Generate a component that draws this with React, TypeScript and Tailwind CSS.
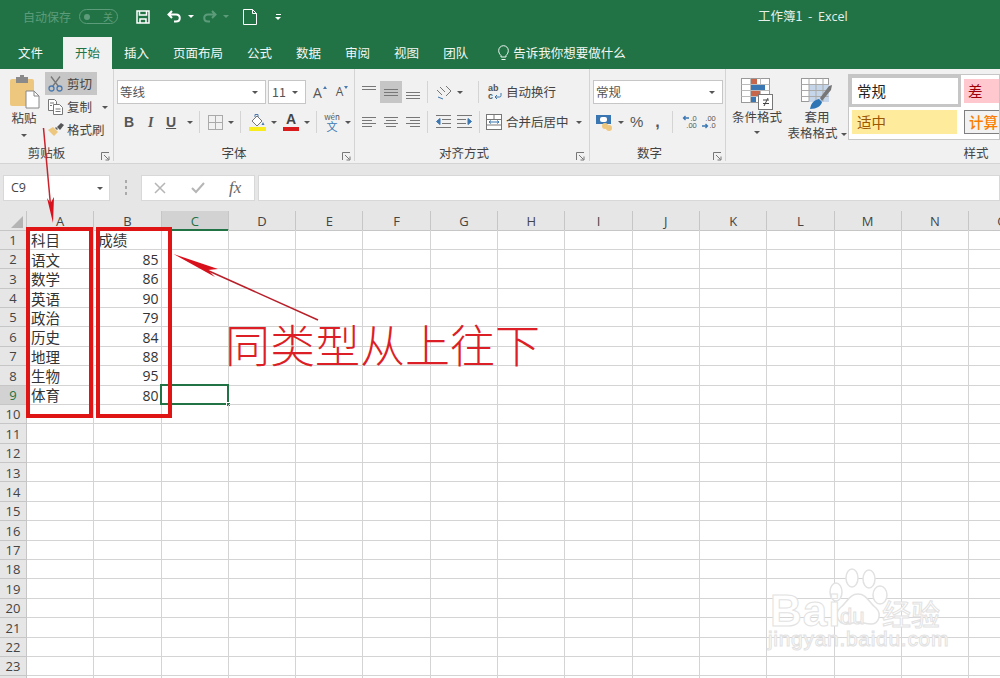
import type { ReactNode } from 'react'

const CJK = "font-['Noto_Sans_CJK_SC','Noto_Sans',sans-serif]"
const COLUMNS = ['A', 'B', 'C', 'D', 'E', 'F', 'G', 'H', 'I', 'J', 'K', 'L', 'M', 'N', 'O']
const ROW_NUMBERS = Array.from({ length: 24 }, (_, i) => i + 1)

const SCORES: Record<number, [string, string]> = {
  1: ['科目', '成绩'],
  2: ['语文', '85'],
  3: ['数学', '86'],
  4: ['英语', '90'],
  5: ['政治', '79'],
  6: ['历史', '84'],
  7: ['地理', '88'],
  8: ['生物', '95'],
  9: ['体育', '80'],
}

const TABS = ['文件', '开始', '插入', '页面布局', '公式', '数据', '审阅', '视图', '团队']

function Caret({ className = '', color = 'border-t-[#555]' }: { className?: string; color?: string }) {
  return (
    <span
      className={`inline-block h-0 w-0 shrink-0 border-x-[3px] border-t-[3px] border-x-transparent ${color} ${className}`}
    />
  )
}

function Sep({ className = '' }: { className?: string }) {
  return <span className={`h-[22px] w-px shrink-0 bg-[#d4d4d4] ${className}`} />
}

function Launcher({ className = '' }: { className?: string }) {
  return (
    <svg width="9" height="9" viewBox="0 0 9 9" className={`shrink-0 ${className}`} fill="none" stroke="#777">
      <path d="M0.5 8V0.5H8" />
      <path d="M3 3l4.5 4.5M4.5 8H8V4.5" />
    </svg>
  )
}

function GroupLabel({ text, launcherClass, className = '' }: { text: string; launcherClass?: string; className?: string }) {
  return (
    <div className={`relative mt-auto flex h-[17px] items-center justify-center pt-[2px] text-[12.5px] text-[#444] ${className}`}>
      <span>{text}</span>
      {launcherClass && <Launcher className={`absolute top-[8px] ${launcherClass}`} />}
    </div>
  )
}

function Combo({ text, className }: { text: string; className: string }) {
  return (
    <div className={`flex h-[24px] items-center justify-between border border-[#c6c6c6] bg-white pl-[2px] pr-[7px] text-[12.5px] text-[#555] ${className}`}>
      <span>{text}</span>
      <Caret />
    </div>
  )
}

function AlignLines({ rows, active }: { rows: [number, number, number][]; active?: boolean }) {
  return (
    <span className={`flex h-[22px] w-[22px] shrink-0 items-center justify-center ${active ? 'bg-[#c6c6c6]' : ''}`}>
      <svg width="16" height="16" viewBox="0 0 16 16" stroke="#777" fill="none">
        {rows.map(([x1, x2, y], i) => (
          <path key={i} d={`M${x1} ${y + 0.5}H${x2}`} />
        ))}
      </svg>
    </span>
  )
}

function PasteIcon() {
  return (
    <svg width="31" height="34" viewBox="0 0 31 34">
      <rect x="1" y="4" width="24" height="27" rx="2" fill="#eec77f" />
      <rect x="7" y="2" width="12" height="6" fill="#8a8a8a" />
      <rect x="11" y="0" width="4" height="4" fill="#8a8a8a" />
      <path d="M17 16h8l5 5v12H17z" fill="#fff" stroke="#888" />
      <path d="M25 16v5h5" fill="none" stroke="#888" />
    </svg>
  )
}

function CutIcon() {
  return (
    <svg width="15" height="16" viewBox="0 0 15 16" fill="none">
      <path d="M3 0.5l7.5 10M12 0.5L4.500 10.500" stroke="#777" strokeWidth="1.300" />
      <circle cx="3.500" cy="12.500" r="2.500" stroke="#4a7ab0" strokeWidth="1.300" />
      <circle cx="11.500" cy="12.500" r="2.500" stroke="#4a7ab0" strokeWidth="1.300" />
    </svg>
  )
}

function CopyIcon() {
  return (
    <svg width="15" height="16" viewBox="0 0 15 16" fill="#fff" stroke="#777">
      <path d="M0.500 0.500h6l2 2v9h-8z" />
      <path d="M5.500 5.500h6l3 3v7h-9z" />
      <path d="M2 4h4M2 6.500h2M7.500 10h5M7.500 12.500h5" />
    </svg>
  )
}

function BrushIcon() {
  return (
    <svg width="16" height="14" viewBox="0 0 16 14">
      <path d="M0 7l5-3 5 5-4 4z" fill="#eec77f" />
      <path d="M7 5l1-1 2 2-1 1z" fill="#666" />
      <path d="M9 4l4-4 3 2-4 5z" fill="#555" />
    </svg>
  )
}

function BorderIcon() {
  return (
    <svg width="15" height="15" viewBox="0 0 15 15" fill="none" stroke="#aaa">
      <rect x="0.500" y="0.500" width="14" height="14" />
      <path d="M7.500 0.500v14M0.500 7.500h14" />
    </svg>
  )
}

function FillIcon() {
  return (
    <svg width="17" height="18" viewBox="0 0 17 18">
      <path d="M3 8l5-5 5 5-5 5z" fill="#fff" stroke="#777" />
      <path d="M6 4V1.500h3V4" fill="none" stroke="#4a7ab0" />
      <path d="M14 9l1.500 3h-3z" fill="#4a7ab0" />
      <rect x="0" y="14" width="17" height="4" fill="#f8ec1c" />
    </svg>
  )
}

function CondFormatIcon() {
  return (
    <svg width="32" height="33" viewBox="0 0 32 33">
      <rect x="0.500" y="0.500" width="28" height="24" fill="#fff" stroke="#999" />
      <path d="M0.500 6.500h28M0.500 12.500h28M0.500 18.500h28M9.500 0.500v24M19.500 0.500v24" stroke="#bbb" />
      <rect x="10" y="1" width="6" height="5" fill="#c8664a" />
      <rect x="10" y="7" width="14" height="5" fill="#3a76b2" />
      <rect x="10" y="13" width="9" height="5" fill="#c8664a" />
      <rect x="10" y="19" width="5" height="5" fill="#3a76b2" />
      <rect x="17.500" y="16.500" width="14" height="15" fill="#fff" stroke="#777" />
      <path d="M22 22h6M22 25.500h6M23 28l4-8" stroke="#444" fill="none" />
    </svg>
  )
}

function TableFormatIcon() {
  return (
    <svg width="32" height="33" viewBox="0 0 32 33">
      <rect x="0.500" y="0.500" width="27" height="23" fill="#fff" stroke="#999" />
      <path d="M8 7h20v17H8z" fill="#c6d6ea" />
      <path d="M0.500 6.500h27M0.500 12.500h27M0.500 18.500h27M8 0.500v23M15 0.500v23M22 0.500v23" stroke="#aaa" />
      <path d="M9 31c1-6 4-9 9-10l3 3c-1 4-5 7-12 7z" fill="#2e75b6" />
      <path d="M19 20l9-12 3-1-1 5-9 11z" fill="#777" />
    </svg>
  )
}

function ClipboardGroup() {
  return (
    <section className="flex h-full w-[114px] shrink-0 flex-col border-r border-[#d4d4d4]">
      <div className="flex pt-[3px]">
        <div className="flex w-[45px] flex-col items-center pl-[3px] pt-[3px] text-[12.5px] text-[#444]">
          <PasteIcon />
          <span className="mt-[-1px] leading-[20px]">粘贴</span>
          <Caret className="mt-[6px]" />
        </div>
        <div className="flex w-[64px] flex-col text-[12.5px] text-[#444]">
          <div className="flex h-[23px] w-[52px] items-center gap-[4px] bg-[#c6c6c6] pl-[3px] pt-px">
            <CutIcon />
            <span>剪切</span>
          </div>
          <div className="flex h-[23px] items-center gap-[4px] pl-[3px] pt-px">
            <CopyIcon />
            <span>复制</span>
            <Caret className="ml-[6px]" />
          </div>
          <div className="flex h-[23px] items-center gap-[3px] pl-[3px] pt-px">
            <BrushIcon />
            <span>格式刷</span>
          </div>
        </div>
      </div>
      <GroupLabel text="剪贴板" launcherClass="right-[3px]" className="pr-[20px]" />
    </section>
  )
}

function FontGroup() {
  return (
    <section className="flex h-full w-[241px] shrink-0 flex-col border-r border-[#d4d4d4]">
      <div className="flex items-center gap-[2px] pl-[3px] pt-[11px]">
        <Combo text="等线" className="w-[149px]" />
        <Combo text="11" className="w-[38px] pl-[3px]" />
        <span className="ml-[5px] font-['Open_Sans',sans-serif] text-[14px] text-[#555]">A</span>
        <span className="ml-[-1px] mb-[10px] h-0 w-0 border-x-[2px] border-b-[3px] border-x-transparent border-b-[#4a7ab0]" />
        <span className="ml-[7px] font-['Open_Sans',sans-serif] text-[12px] text-[#555]">A</span>
        <span className="ml-[-1px] mb-[10px] h-0 w-0 border-x-[2px] border-t-[3px] border-x-transparent border-t-[#4a7ab0]" />
      </div>
      <div className="mt-[6px] flex h-[24px] items-center pl-[10px] font-['Liberation_Sans',sans-serif] text-[14px] text-[#555]">
        <span className="w-[18px] font-bold">B</span>
        <span className="ml-[6px] w-[18px] font-['Liberation_Serif',serif] font-bold italic">I</span>
        <span className="w-[16px] font-bold underline">U</span>
        <Caret className="ml-[5px]" />
        <Sep className="ml-[6px]" />
        <span className="ml-[8px] flex"><BorderIcon /></span>
        <Caret className="ml-[5px]" />
        <Sep className="ml-[6px]" />
        <span className="ml-[8px] flex"><FillIcon /></span>
        <Caret className="ml-[5px]" />
        <span className="ml-[6px] flex w-[16px] flex-col items-center font-bold leading-[13px] text-[#444]">
          A
          <span className="mt-[1px] h-[4px] w-[16px] bg-[#d91b1b]" />
        </span>
        <Caret className="ml-[5px]" />
        <Sep className="ml-[6px]" />
        <span className={`ml-[8px] flex w-[14px] flex-col items-center text-[8px] leading-[8px] text-[#555] ${CJK}`}>
          wén
          <span className="text-[11px] leading-[10px] text-[#3a76b2]">文</span>
        </span>
        <Caret className="ml-[6px]" />
      </div>
      <GroupLabel text="字体" launcherClass="right-[3px]" />
    </section>
  )
}

function WrapTextIcon() {
  return (
    <span className="relative flex h-[16px] w-[14px] shrink-0 flex-col font-['Liberation_Sans',sans-serif] text-[9px] font-bold leading-[8px] text-[#555]">
      <span>ab</span>
      <span>c</span>
      <svg width="8" height="7" viewBox="0 0 8 7" className="absolute bottom-0 right-0" fill="none" stroke="#3a76b2">
        <path d="M7 0v2.500a1.500 1.500 0 0 1-1.500 1.500H1M3 2L1 4l2 2" />
      </svg>
    </span>
  )
}

function AlignmentGroup() {
  return (
    <section className="flex h-full w-[235px] shrink-0 flex-col border-r border-[#d4d4d4]">
      <div className="flex h-[34px] items-end pl-[3px]">
        <AlignLines rows={[[1, 15, 2], [1, 15, 5]]} />
        <AlignLines active rows={[[1, 15, 5], [1, 15, 8], [1, 15, 11]]} />
        <AlignLines rows={[[1, 15, 8], [1, 15, 11], [1, 15, 14]]} />
        <Sep className="ml-[3px]" />
        <span className="relative mb-[3px] ml-[7px] h-[16px] w-[17px] shrink-0">
          <svg width="17" height="16" viewBox="0 0 17 16" fill="none" stroke="#777">
            <path d="M2 6l5 5M5 3l5 5M11 2l5 5-5 5" />
            <path d="M3 13l5 2" stroke="#3a76b2" />
          </svg>
        </span>
        <Caret className="mb-[9px] ml-[5px]" />
        <Sep className="ml-[15px]" />
        <span className="mb-[3px] ml-[9px] flex">
          <WrapTextIcon />
        </span>
        <span className="mb-[1px] ml-[4px] text-[12.5px] leading-[20px] text-[#444]">自动换行</span>
      </div>
      <div className="mt-[7px] flex h-[24px] items-center pl-[3px]">
        <AlignLines rows={[[1, 15, 3], [1, 11, 6], [1, 15, 9], [1, 11, 12]]} />
        <AlignLines rows={[[1, 15, 3], [3, 13, 6], [1, 15, 9], [3, 13, 12]]} />
        <AlignLines rows={[[1, 15, 3], [5, 15, 6], [1, 15, 9], [5, 15, 12]]} />
        <Sep className="ml-[3px]" />
        <svg width="16" height="14" viewBox="0 0 16 14" className="ml-[7px]" fill="none" stroke="#777">
          <path d="M1 0.500h15M7 4.500h9M7 8.500h9M1 12.500h15" />
          <path d="M5 3.500L1.500 6.500 5 9.500z" fill="#3a76b2" stroke="#3a76b2" />
        </svg>
        <svg width="16" height="14" viewBox="0 0 16 14" className="ml-[6px]" fill="none" stroke="#777">
          <path d="M0 0.500h15M0 4.500h9M0 8.500h9M0 12.500h15" />
          <path d="M11 3.500L14.500 6.500 11 9.500z" fill="#3a76b2" stroke="#3a76b2" />
        </svg>
        <Sep className="ml-[6px]" />
        <svg width="16" height="16" viewBox="0 0 16 16" className="ml-[6px]" fill="#fff" stroke="#777">
          <rect x="0.500" y="0.500" width="15" height="15" />
          <path d="M0.500 5.500h15M0.500 11h15M8 0.500v5" fill="none" />
          <path d="M3 8h10M5 6.500L3 8l2 1.500M11 6.500L13 8l-2 1.500" stroke="#3a76b2" fill="none" />
        </svg>
        <span className="ml-[4px] text-[12.5px] text-[#444]">合并后居中</span>
        <Caret className="ml-[7px]" />
      </div>
      <GroupLabel text="对齐方式" launcherClass="right-[4px]" className="pr-[16px]" />
    </section>
  )
}

function DecimalIcon({ increase }: { increase?: boolean }) {
  return (
    <svg width="15" height="15" viewBox="0 0 15 15" fill="none" stroke="#3a76b2" strokeWidth="1.300">
      {increase ? <path d="M7 3H1.500M3.500 1L1.500 3l2 2" /> : <path d="M1 11h5.500M4.500 9l2 2-2 2" />}
    </svg>
  )
}

function NumberGroup() {
  return (
    <section className="flex h-full w-[136px] shrink-0 flex-col border-r border-[#d4d4d4]">
      <div className="pl-[3px] pt-[11px]">
        <Combo text="常规" className="w-[130px]" />
      </div>
      <div className="mt-[6px] flex h-[24px] items-center pl-[6px] font-['Liberation_Sans',sans-serif] text-[#555]">
        <svg width="17" height="17" viewBox="0 0 17 17">
          <rect x="0" y="1" width="15" height="9" fill="#3a76b2" />
          <rect x="4" y="3" width="7" height="5" rx="2" fill="#fff" />
          <circle cx="9" cy="12" r="3" fill="#eec77f" />
          <circle cx="13" cy="14" r="3" fill="#eec77f" />
        </svg>
        <Caret className="ml-[5px]" />
        <span className="ml-[6px] text-[15px]">%</span>
        <span className="ml-[12px] font-bold">,</span>
        <Sep className="ml-[12px]" />
        <span className="relative ml-[9px] h-[15px] w-[15px] shrink-0 text-[7.500px] leading-[7.500px]">
          <DecimalIcon increase />
          <span className="absolute right-0 top-0">.0</span>
          <span className="absolute bottom-0 right-0">.00</span>
        </span>
        <span className="relative ml-[4px] h-[15px] w-[15px] shrink-0 text-[7.500px] leading-[7.500px]">
          <DecimalIcon />
          <span className="absolute right-0 top-0">.00</span>
          <span className="absolute bottom-0 right-0">.0</span>
        </span>
      </div>
      <GroupLabel text="数字" launcherClass="right-[3px]" className="pr-[16px]" />
    </section>
  )
}

function StylesGroup() {
  return (
    <section className="flex h-full min-w-0 flex-1 flex-col">
      <div className="flex pt-[5px]">
        <div className="flex w-[60px] shrink-0 flex-col items-center pl-[2px] pt-[4px] text-[12.5px] leading-[16px] text-[#444]">
          <CondFormatIcon />
          <span className="mt-[-2px]">条件格式</span>
          <Caret className="mt-[6px]" />
        </div>
        <div className="flex w-[62px] shrink-0 flex-col items-center pt-[4px] text-[12.5px] leading-[16px] text-[#444]">
          <TableFormatIcon />
          <span className="mt-[-2px]">套用</span>
          <span className="whitespace-nowrap">表格格式<Caret className="mb-[2px] ml-[3px]" /></span>
        </div>
        <div className="h-[66px] flex-1 overflow-hidden border border-[#c6c6c6] bg-white text-[14.500px]">
          <div className="flex h-[32px] w-[170px]">
            <span className="flex h-[32px] w-[112px] items-center border-[3px] border-[#c6c6c6] pl-[5px] text-[#222]">常规</span>
            <span className="ml-[3px] mt-[4px] flex h-[24px] w-[50px] items-center bg-[#ffc7ce] pl-[4px] text-[#9c0006]">差</span>
          </div>
          <div className="mt-[3px] flex w-[170px]">
            <span className="ml-[3px] flex h-[24px] w-[105px] items-center bg-[#ffeb9c] pl-[5px] text-[#9c5700]">适中</span>
            <span className="ml-[7px] flex h-[24px] w-[50px] items-center border border-[#7f7f7f] bg-[#f2f2f2] pl-[4px] font-medium text-[#fa7d00]">计算</span>
          </div>
        </div>
      </div>
      <GroupLabel text="样式" className="pl-[226px]" />
    </section>
  )
}

function TitleBar() {
  return (
    <header className="flex h-[37px] items-center bg-[#217346] pb-[4px] pl-[23px] text-white">
      <span className="w-[49px] text-[12px] text-[#5d9c7a]">自动保存</span>
      <span className="ml-[7px] flex h-[15px] w-[39px] items-center justify-between rounded-full border border-[#5d9c7a] px-[4px] text-[10px] text-[#5d9c7a]">
        <span className="h-[6px] w-[6px] rounded-full bg-[#5d9c7a]" />关
      </span>
      <svg width="14" height="14" viewBox="0 0 14 14" className="ml-[18px]" fill="none" stroke="#fff" strokeWidth="1.500">
        <path d="M1 1h12v12H1z" />
        <path d="M3.500 1v4h7V1M4 13V9h6v4" />
      </svg>
      <svg width="15" height="13" viewBox="0 0 15 13" className="ml-[17px]" fill="none" stroke="#fff" strokeWidth="2">
        <path d="M5 1L1.500 4.500 5 8M2 4.500h7c5 0 5 7 0 7H7" />
      </svg>
      <Caret className="ml-[6px]" color="border-t-white" />
      <svg width="15" height="13" viewBox="0 0 15 13" className="ml-[8px]" fill="none" stroke="#5d9c7a" strokeWidth="2">
        <path d="M10 1l3.500 3.500L10 8M13 4.500H6c-5 0-5 7 0 7h2" />
      </svg>
      <Caret className="ml-[6px]" color="border-t-[#5d9c7a]" />
      <svg width="14" height="16" viewBox="0 0 14 16" className="ml-[14px]" fill="none" stroke="#fff">
        <path d="M0.500 0.500h9l4 4v11H0.500zM9.500 0.500v4h4" />
      </svg>
      <span className="ml-[18px] flex flex-col items-center gap-[2px]">
        <span className="h-px w-[5px] bg-white" />
        <Caret color="border-t-white" />
      </span>
      <span className="ml-[477px] whitespace-nowrap text-[12.5px] text-[#e6f0ea]">
        工作簿1 &nbsp;-&nbsp; <span className="font-['Open_Sans',sans-serif]">Excel</span>
      </span>
    </header>
  )
}

function TabBar() {
  return (
    <nav className="flex h-[32px] items-stretch bg-[#217346] pl-[6px] text-[12.5px] text-[#f3f7f4]">
      {TABS.map((tab) => (
        <span
          key={tab}
          className={
            tab === '开始'
              ? 'ml-[8px] flex items-center bg-[#f1f1f1] px-[12px] text-[#217346]'
              : 'flex items-center px-[12px]'
          }
        >
          {tab}
        </span>
      ))}
      <span className="ml-[18px] flex items-center">
        <svg width="11" height="16" viewBox="0 0 11 16" fill="none" stroke="#f3f7f4">
          <path d="M3 10.500C1.500 9 0.700 7.500 0.700 5.500a4.800 4.800 0 0 1 9.600 0c0 2-.8 3.500-2.300 5V12H3zM3.500 14.500h4" />
        </svg>
        <span className="ml-[4px]">告诉我你想要做什么</span>
      </span>
    </nav>
  )
}

function FormulaBar() {
  return (
    <div className="flex h-[47px] items-start bg-[#e6e6e6] pl-[3px] pt-[11px]">
      <div className="flex h-[26px] w-[107px] items-center justify-between border border-[#d8d8d8] bg-white pl-[7px] pr-[6px] font-['Open_Sans',sans-serif] text-[12.5px] text-[#444]">
        C9
        <Caret />
      </div>
      <span className="ml-[15px] mt-[5px] flex flex-col gap-[3px]">
        <span className="h-[3px] w-[2px] bg-[#aaa]" />
        <span className="h-[3px] w-[2px] bg-[#aaa]" />
        <span className="h-[3px] w-[2px] bg-[#aaa]" />
      </span>
      <div className="ml-[14px] flex h-[26px] w-[114px] items-center border border-[#d8d8d8] bg-white pl-[12px]">
        <svg width="13" height="12" viewBox="0 0 13 12" stroke="#b5b5b5" strokeWidth="1.500" fill="none">
          <path d="M1 1l10 10M11 1L1 11" />
        </svg>
        <svg width="15" height="12" viewBox="0 0 15 12" className="ml-[24px]" stroke="#b5b5b5" strokeWidth="2" fill="none">
          <path d="M1 6l4 4 8-9" />
        </svg>
        <span className="ml-[23px] font-['Liberation_Serif',serif] text-[17px] italic text-[#666]">fx</span>
      </div>
      <div className="ml-[3px] h-[26px] flex-1 border border-[#d8d8d8] bg-white" />
    </div>
  )
}

function Sheet() {
  return (
    <div className="grid grid-cols-[27px_repeat(15,67.3px)] auto-rows-[19.4px] bg-white">
      <div className="relative h-[20px] border-b border-r border-[#c6c6c6] bg-[#e6e6e6]">
        <span className="absolute bottom-[2px] right-[3px] h-0 w-0 border-b-[12px] border-l-[12px] border-b-[#b4b4b4] border-l-transparent" />
      </div>
      {COLUMNS.map((col) => (
        <div
          key={col}
          className={
            col === 'C'
              ? "flex h-[20px] items-center justify-center border-b-2 border-r border-b-[#217346] border-r-[#c6c6c6] bg-[#d2d2d2] pt-[3px] font-['Open_Sans',sans-serif] text-[13px] text-[#217346]"
              : "flex h-[20px] items-center justify-center border-b border-r border-[#c6c6c6] bg-[#e6e6e6] pt-[3px] font-['Open_Sans',sans-serif] text-[13px] text-[#444]"
          }
        >
          {col}
        </div>
      ))}
      {ROW_NUMBERS.map((row) => (
        <Row key={row} row={row} />
      ))}
    </div>
  )
}

function Row({ row }: { row: number }) {
  const data = SCORES[row]
  return (
    <>
      <div
        className={
          row === 9
            ? "flex items-center justify-center border-b border-r border-[#c6c6c6] bg-[#d2d2d2] pt-[2px] font-['Open_Sans',sans-serif] text-[13px] text-[#217346]"
            : "flex items-center justify-center border-b border-r border-[#c6c6c6] bg-[#e6e6e6] pt-[2px] font-['Open_Sans',sans-serif] text-[13px] text-[#444]"
        }
      >
        {row}
      </div>
      {COLUMNS.map((col) => (
        <Cell key={col} col={col} row={row} value={data?.[col === 'A' ? 0 : 1]} />
      ))}
    </>
  )
}

function Cell({ col, row, value }: { col: string; row: number; value?: string }) {
  const hasValue = col === 'A' || col === 'B'
  const numeric = hasValue && value !== undefined && /^\d+$/.test(value)
  return (
    <div
      className={`relative flex items-center overflow-visible border-b border-r border-[#d4d4d4] pt-[2px] text-[14.5px] leading-none text-[#333] ${
        numeric ? "justify-end pr-[2px] font-['Open_Sans',sans-serif] text-[14px]" : 'pl-[4px]'
      }`}
    >
      {hasValue ? value : null}
      {col === 'C' && row === 9 && <Selection />}
    </div>
  )
}

function Selection() {
  return (
    <span className="absolute left-[-2px] top-[-2px] h-[21px] w-[69px] border-2 border-[#217346]">
      <span className="absolute bottom-[-4px] right-[-4px] h-[5px] w-[5px] border border-white bg-[#217346]" />
    </span>
  )
}

function Annotations() {
  return (
    <>
      <span className="absolute left-[26px] top-[227px] h-[191px] w-[67px] border-[4px] border-[#df1414]" />
      <span className="absolute left-[96px] top-[227px] h-[191px] w-[76px] border-[4px] border-[#df1414]" />
      <svg width="1000" height="678" viewBox="0 0 1000 678" className="pointer-events-none absolute left-0 top-0">
        <path d="M43.500 128L50.500 205" stroke="#c8232c" strokeWidth="1.500" fill="none" />
        <path d="M53 223L47 198 50.500 203 54 197z" fill="#d8101c" />
        <path d="M318 320L200 267" stroke="#b81f28" strokeWidth="1.500" fill="none" />
        <path d="M173.500 254L218 269 208 270 215 277z" fill="#d8101c" />
      </svg>
      <span className={`absolute left-[225px] top-[314px] whitespace-nowrap text-[45px] font-light leading-[60px] text-[#dc1f26] ${CJK}`}>
        同类型从上往下
      </span>
    </>
  )
}

function Watermark() {
  return (
    <div className="absolute left-[768px] top-[568px] h-[100px] w-[190px] font-['Liberation_Sans',sans-serif]">
      <svg width="60" height="62" viewBox="0 0 60 62" className="absolute left-[60px] top-[0px]" fill="#fff" stroke="#e2e2e2" strokeWidth="1.500">
        <ellipse cx="8" cy="24" rx="6" ry="9" />
        <ellipse cx="24" cy="10" rx="6" ry="9" />
        <ellipse cx="41" cy="11" rx="6" ry="9" />
        <ellipse cx="52" cy="27" rx="7" ry="9" />
        <path d="M30 26c-9 0-11 9-18 14-6 6-2 16 6 16 5 0 8-2 12-2s8 2 13 2c8 0 11-10 5-16-7-5-9-14-18-14z" />
      </svg>
      <span className="absolute left-[2px] top-[18px] text-[44px] font-bold leading-[50px] tracking-[1px] text-white [-webkit-text-stroke:1px_#e2e2e2]">Bai</span>
      <span className="absolute left-[72px] top-[36px] text-[22px] leading-[26px] text-white [-webkit-text-stroke:1px_#e2e2e2]">du</span>
      <span className={`absolute left-[114px] top-[28px] whitespace-nowrap text-[29px] leading-[34px] text-white [-webkit-text-stroke:1px_#e2e2e2] ${CJK}`}>经验</span>
      <span className="absolute left-[0px] top-[58px] whitespace-nowrap text-[21px] leading-[26px] tracking-[0.700px] text-white [-webkit-text-stroke:1px_#e2e2e2]">jingyan.baidu.com</span>
    </div>
  )
}

function Ribbon({ children }: { children: ReactNode }) {
  return (
    <div className="flex h-[95px] border-b border-[#d4d4d4] bg-[#f1f1f1] pb-[2px]">{children}</div>
  )
}

export default function App() {
  return (
    <div className={`relative h-[678px] w-[1000px] overflow-hidden bg-white ${CJK}`}>
      <TitleBar />
      <TabBar />
      <Ribbon>
        <ClipboardGroup />
        <FontGroup />
        <AlignmentGroup />
        <NumberGroup />
        <StylesGroup />
      </Ribbon>
      <FormulaBar />
      <Sheet />
      <Annotations />
      <Watermark />
    </div>
  )
}
